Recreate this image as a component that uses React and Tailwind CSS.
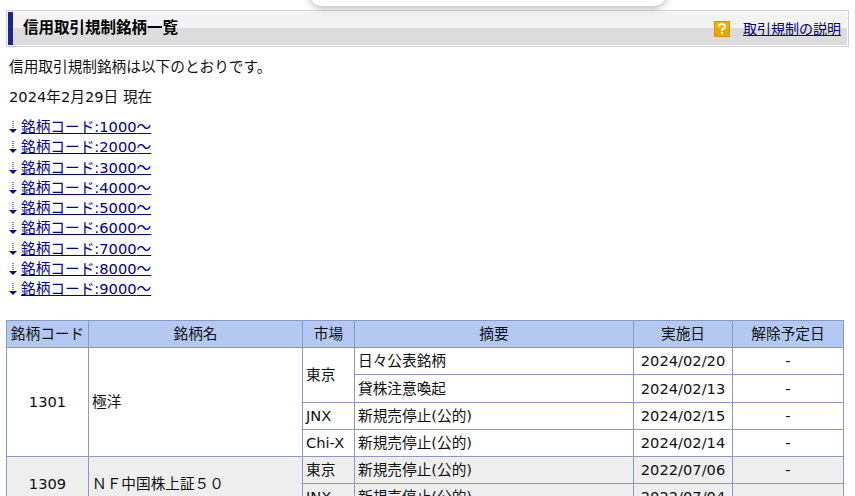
import React from 'react';

const codes = [1000, 2000, 3000, 4000, 5000, 6000, 7000, 8000, 9000];

const HelpIcon = () => (
  <svg width="16" height="16" viewBox="0 0 16 16" className="shrink-0">
    <rect x="0.5" y="0.5" width="15" height="15" fill="#f0b400" stroke="#e08a10" />
    <rect x="1" y="8" width="14" height="7" fill="#dcae00" />
    <path d="M5 5.5 Q5 3 8 3 Q11 3 11 5.5 Q11 7 9 8 L8 9 V10" fill="none" stroke="#fff" strokeWidth="2" />
    <rect x="7" y="11" width="2" height="2" fill="#fff" />
  </svg>
);

const DownArrow = () => (
  <svg width="8" height="14" viewBox="0 0 8 14" className="shrink-0">
    <path d="M4 1v1M4 3v1M4 5v1M4 7v1M4 9v1" stroke="#000099" strokeWidth="1" />
    <path d="M0.5 9.5 H7.5 M1.5 10.5 H6.5 M2.5 11.5 H5.5 M3.5 12.5 H4.5" stroke="#000099" strokeWidth="1" />
  </svg>
);

const Cell = ({ children, className = '', ...props }) => (
  <td className={`border border-[#8b97c6] px-[3px] py-0 ${className}`} {...props}>{children}</td>
);

const Th = ({ children, className = '' }) => (
  <th className={`border border-[#8b97c6] bg-[#b3c9f2] font-normal text-center px-0 py-0 ${className}`}>{children}</th>
);

export default function App() {
  return (
    <div className="relative h-[496px] overflow-hidden bg-white text-[14.67px] text-[#111] px-[6px] pt-[10px] font-['DejaVu_Sans','Noto_Sans_CJK_JP',sans-serif]">
      {/* popup bottom edge */}
      <div className="absolute left-[311px] top-[-40px] h-[46px] w-[354px] rounded-b-[10px] bg-white shadow-[0_2px_8px_rgba(0,0,0,0.3)]" />

      <div className="h-[37px] border border-[#cfcfe3] p-px">
        <div className="flex h-full items-center justify-between border-l-[5px] border-[#1a2a8c] bg-[linear-gradient(#f3f3f3_0,#f3f3f3_50%,#dcdcdc_50%,#dcdcdc_100%)] pl-[10px] pr-[6px]">
          <h1 className="text-[15.5px] font-bold text-black">信用取引規制銘柄一覧</h1>
          <div className="flex items-center gap-[13px] pt-px">
            <HelpIcon />
            <a href="#" className="text-[14px] text-[#000080] underline">取引規制の説明</a>
          </div>
        </div>
      </div>

      <p className="ml-[3px] mt-[9px] leading-[21px]">信用取引規制銘柄は以下のとおりです。</p>
      <p className="ml-[3px] mt-[9px] leading-[21px]">2024年2月29日 現在</p>

      <div className="ml-[3px] mt-[10px] flex flex-col">
        {codes.map((c) => (
          <div key={c} className="flex h-[20.25px] items-center gap-[4px] leading-[20px]">
            <DownArrow />
            <a href="#" className="text-[#000099] underline">銘柄コード:{c}～</a>
          </div>
        ))}
      </div>

      <table className="mt-[21px] w-[837px] table-fixed border-collapse">
        <colgroup>
          <col className="w-[82px]" />
          <col className="w-[214px]" />
          <col className="w-[52px]" />
          <col className="w-[279px]" />
          <col className="w-[99px]" />
          <col className="w-[111px]" />
        </colgroup>
        <thead>
          <tr className="h-[27px]">
            <Th>銘柄コード</Th>
            <Th>銘柄名</Th>
            <Th>市場</Th>
            <Th>摘要</Th>
            <Th>実施日</Th>
            <Th>解除予定日</Th>
          </tr>
        </thead>
        <tbody>
          <tr className="h-[27px]">
            <Cell rowSpan={4} className="text-center">1301</Cell>
            <Cell rowSpan={4}>極洋</Cell>
            <Cell rowSpan={2}>東京</Cell>
            <Cell>日々公表銘柄</Cell>
            <Cell className="text-center">2024/02/20</Cell>
            <Cell className="text-center">-</Cell>
          </tr>
          <tr className="h-[28px]">
            <Cell>貸株注意喚起</Cell>
            <Cell className="text-center">2024/02/13</Cell>
            <Cell className="text-center">-</Cell>
          </tr>
          <tr className="h-[27px]">
            <Cell>JNX</Cell>
            <Cell>新規売停止(公的)</Cell>
            <Cell className="text-center">2024/02/15</Cell>
            <Cell className="text-center">-</Cell>
          </tr>
          <tr className="h-[27px]">
            <Cell>Chi-X</Cell>
            <Cell>新規売停止(公的)</Cell>
            <Cell className="text-center">2024/02/14</Cell>
            <Cell className="text-center">-</Cell>
          </tr>
          <tr className="h-[27px] bg-[#eeeeee]">
            <Cell rowSpan={2} className="text-center">1309</Cell>
            <Cell rowSpan={2}>ＮＦ中国株上証５０</Cell>
            <Cell>東京</Cell>
            <Cell>新規売停止(公的)</Cell>
            <Cell className="text-center">2022/07/06</Cell>
            <Cell className="text-center">-</Cell>
          </tr>
          <tr className="h-[27px] bg-[#eeeeee]">
            <Cell>JNX</Cell>
            <Cell>新規売停止(公的)</Cell>
            <Cell className="text-center">2022/07/04</Cell>
            <Cell className="text-center">-</Cell>
          </tr>
        </tbody>
      </table>
    </div>
  );
}
